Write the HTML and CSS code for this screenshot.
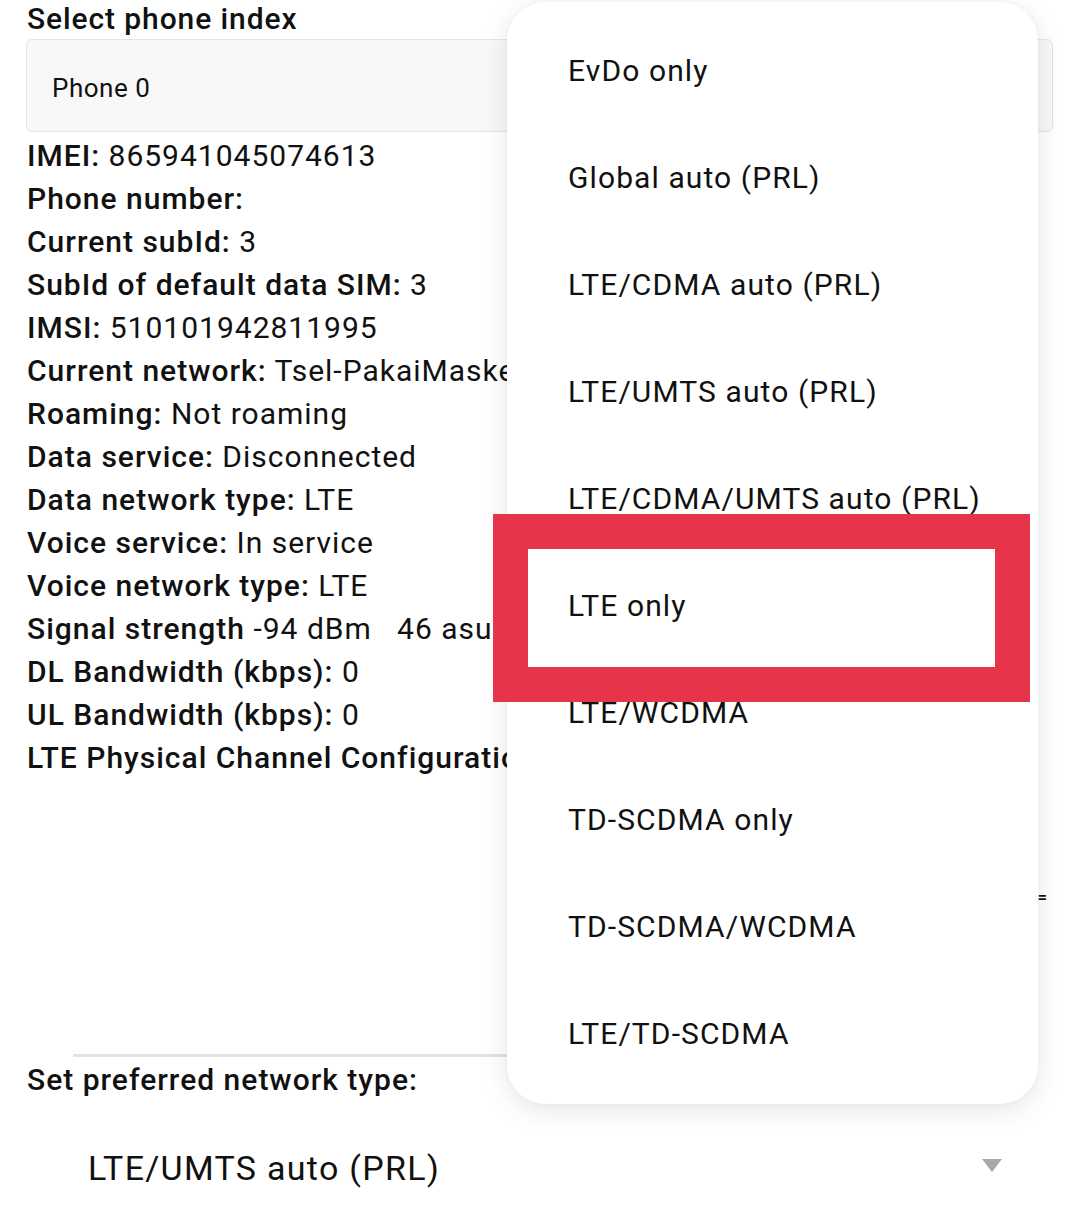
FILE: index.html
```html
<!DOCTYPE html>
<html>
<head>
<meta charset="utf-8">
<link rel="stylesheet" href="styles.css">
</head>
<body>
<div class="page">
  <div class="title">Select phone index</div>
  <div class="phone-spinner">Phone 0</div>
  <div class="info">
    <div class="row"><b>IMEI:</b> 865941045074613</div>
    <div class="row"><b>Phone number:</b></div>
    <div class="row"><b>Current subId:</b> 3</div>
    <div class="row"><b>SubId of default data SIM:</b> 3</div>
    <div class="row"><b>IMSI:</b> 510101942811995</div>
    <div class="row"><b>Current network:</b> Tsel-PakaiMasker</div>
    <div class="row"><b>Roaming:</b> Not roaming</div>
    <div class="row"><b>Data service:</b> Disconnected</div>
    <div class="row"><b>Data network type:</b> LTE</div>
    <div class="row"><b>Voice service:</b> In service</div>
    <div class="row"><b>Voice network type:</b> LTE</div>
    <div class="row"><b>Signal strength</b> -94 dBm &nbsp; 46 asu</div>
    <div class="row"><b>DL Bandwidth (kbps):</b> 0</div>
    <div class="row"><b>UL Bandwidth (kbps):</b> 0</div>
    <div class="row"><b>LTE Physical Channel Configuration:</b></div>
  </div>
  <div class="edge-row"><span class="edge">=</span></div>
  <div class="divider"></div>
  <div class="label">Set preferred network type:</div>
  <div class="net-spinner">
    <span>LTE/UMTS auto (PRL)</span>
    <svg class="arrow" width="20" height="13" viewBox="0 0 20 13"><polygon points="0,0 20,0 10,13" fill="#a8a8a8"/></svg>
  </div>
</div>

<div class="popup">
  <div class="item">EvDo only</div>
  <div class="item">Global auto (PRL)</div>
  <div class="item">LTE/CDMA auto (PRL)</div>
  <div class="item">LTE/UMTS auto (PRL)</div>
  <div class="item">LTE/CDMA/UMTS auto (PRL)</div>
  <div class="item">LTE only</div>
  <div class="item">LTE/WCDMA</div>
  <div class="item">TD-SCDMA only</div>
  <div class="item">TD-SCDMA/WCDMA</div>
  <div class="item">LTE/TD-SCDMA</div>
</div>
<div class="highlight"></div>
</body>
</html>
```
FILE: styles.css
```css
html, body {
  margin: 0;
  padding: 0;
  background: #ffffff;
}
body {
  font-family: Roboto, "Noto Sans", sans-serif;
  color: #111;
  width: 1079px;
  height: 1230px;
  overflow: hidden;
  position: relative;
}
.page {
  padding: 0 26px 0 26px;
}
.title {
  font-size: 30px;
  font-weight: 500;
  letter-spacing: 0.9px;
  line-height: 38px;
  padding-left: 1px;
}
.phone-spinner {
  margin-top: 1px;
  background: #f8f8f8;
  border: 1px solid #e4e4e4;
  border-radius: 6px;
  display: flex;
  align-items: center;
  padding: 5px 0 0 25px;
  box-sizing: border-box;
  height: 93px;
  font-size: 26px;
  letter-spacing: 0.5px;
}
.info {
  margin-top: 2px;
  padding-left: 1px;
}
.row {
  font-size: 30px;
  letter-spacing: 1px;
  line-height: 43px;
  white-space: nowrap;
}
.row b {
  font-weight: 500;
}
.edge-row {
  display: flex;
  justify-content: flex-end;
  margin-top: 109px;
  margin-right: 6px;
  height: 20px;
}
.edge {
  font-size: 16px;
  font-weight: 700;
  line-height: 20px;
}
.divider {
  margin: 146px 47px 0 47px;
  height: 3px;
  background: #e2e2e2;
}
.label {
  font-size: 30px;
  font-weight: 500;
  letter-spacing: 1px;
  line-height: 46px;
  margin-top: 0;
  padding-left: 1px;
}
.net-spinner {
  height: 130px;
  display: flex;
  align-items: center;
  justify-content: space-between;
  padding-left: 62px;
  padding-right: 51px;
  font-size: 34px;
  letter-spacing: 1.3px;
}
.arrow {
  margin-top: -6px;
}
.popup {
  position: absolute;
  left: 507px;
  top: 2px;
  width: 531px;
  height: 1102px;
  box-sizing: border-box;
  background: #fff;
  border-radius: 38px;
  box-shadow: 0 6px 28px rgba(0,0,0,0.10), 0 0 4px rgba(0,0,0,0.04);
  padding: 15px 0 16px 61px;
}
.item {
  height: 107px;
  display: flex;
  align-items: center;
  font-size: 30px;
  letter-spacing: 1.1px;
  color: #111;
  white-space: nowrap;
}
.highlight {
  position: absolute;
  left: 493px;
  top: 514px;
  width: 537px;
  height: 188px;
  box-sizing: border-box;
  border: 35px solid #e6344a;
}
```
